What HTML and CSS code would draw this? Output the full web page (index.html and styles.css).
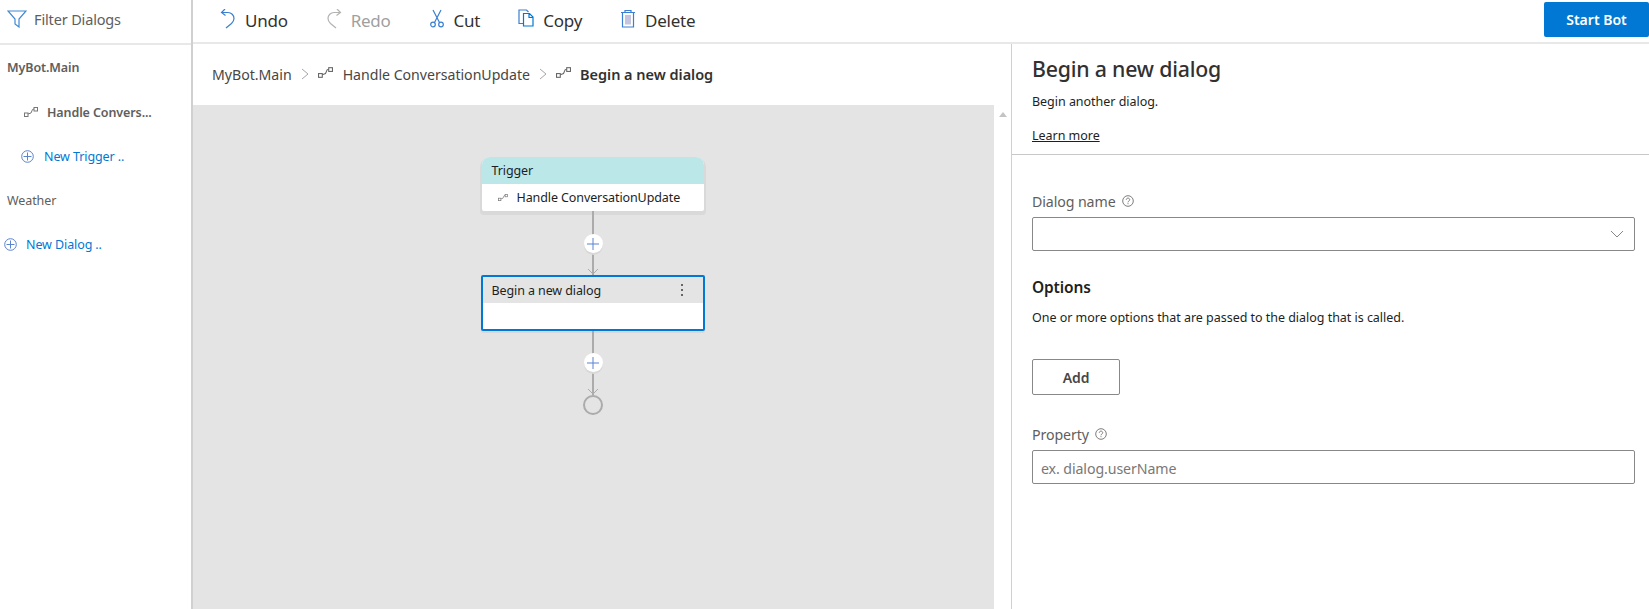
FILE: index.html
```html
<!DOCTYPE html>
<html lang="en">
<head>
<meta charset="utf-8">
<title>Begin a new dialog</title>
<link rel="stylesheet" href="styles.css">
</head>
<body>
<div class="app">
  <aside class="sidebar">
    <div class="filter">
      <svg class="filter-icon" viewBox="0 0 20 18"><path d="M1 1h18l-7 8v8l-4-3V9z"/></svg>
      <span>Filter Dialogs</span>
    </div>
    <div class="tree">
      <div class="tree-row tree-root tree-first strong">MyBot.Main</div>
      <div class="tree-row tree-trigger strong">
        <svg class="node-icon" viewBox="0 0 14 10"><use href="#trigger"/></svg>
        <span>Handle Convers...</span>
      </div>
      <div class="tree-row tree-new-trigger link">
        <svg class="plus-icon" viewBox="0 0 13 13"><use href="#circle-plus"/></svg>
        <span>New Trigger ..</span>
      </div>
      <div class="tree-row tree-root">Weather</div>
      <div class="tree-row tree-new-dialog link">
        <svg class="plus-icon" viewBox="0 0 13 13"><use href="#circle-plus"/></svg>
        <span>New Dialog ..</span>
      </div>
    </div>
  </aside>

  <div class="main">
    <header class="toolbar">
      <div class="action">
        <svg class="tool-icon" viewBox="0 0 16 20"><path d="M5 1L1.500 4.500 5.500 7.500M1.500 4.500h6.500a6 6 0 0 1 6 6c0 2-1 3.500-2.500 5L6 20" transform="translate(0 -1)"/></svg>
        <span>Undo</span>
      </div>
      <div class="action disabled">
        <svg class="tool-icon" viewBox="0 0 16 20"><path d="M11 1l3.500 3.500L10.500 7.500M14.500 4.500H8a6 6 0 0 0-6 6c0 2 1 3.500 2.500 5L10 20" transform="translate(0 -1)"/></svg>
        <span>Redo</span>
      </div>
      <div class="action">
        <svg class="tool-icon" viewBox="0 0 16 20"><path d="M4 1l6.500 12.500M12 1L5.500 13.500"/><circle cx="4" cy="15.500" r="2.300"/><circle cx="12" cy="15.500" r="2.300"/></svg>
        <span>Cut</span>
      </div>
      <div class="action">
        <svg class="tool-icon" viewBox="0 0 16 20"><path d="M5.500 14.500H1V1h7.500l2 2"/><path class="strong-stroke" d="M5.500 4.500h6l3.500 3.500v9H5.500zM11 4.500V8.500h4"/></svg>
        <span>Copy</span>
      </div>
      <div class="action">
        <svg class="tool-icon" viewBox="0 0 16 20"><path d="M1 3.500h14M5 3.500V1.500h6v2M2.500 3.500v14.500h11V3.500"/><path class="bars" d="M6 6v9.500M8 6v9.500M10 6v9.500"/></svg>
        <span>Delete</span>
      </div>
      <button class="start-bot">Start Bot</button>
    </header>

    <div class="workspace">
      <section class="design">
        <nav class="crumbs">
          <span>MyBot.Main</span>
          <svg class="chevron" viewBox="0 0 8 12"><path d="M1 1l6 5-6 5"/></svg>
          <svg class="crumb-icon" viewBox="0 0 14 10"><use href="#trigger"/></svg>
          <span>Handle ConversationUpdate</span>
          <svg class="chevron" viewBox="0 0 8 12"><path d="M1 1l6 5-6 5"/></svg>
          <svg class="crumb-icon" viewBox="0 0 14 10"><use href="#trigger"/></svg>
          <span class="crumb-current">Begin a new dialog</span>
        </nav>
        <div class="canvas-wrap">
          <div class="canvas">
            <div class="card trigger-card">
              <div class="card-head trigger-head">Trigger</div>
              <div class="card-body">
                <svg class="card-icon" viewBox="0 0 14 10"><use href="#trigger"/></svg>
                <span>Handle ConversationUpdate</span>
              </div>
            </div>
            <div class="edge edge-first">
              <span class="add"><svg viewBox="0 0 12 12"><path d="M6 0v12M0 6h12"/></svg></span>
              <svg class="arrow" viewBox="0 0 12 7"><path d="M1 1l5 5 5-5"/></svg>
            </div>
            <div class="card dialog-card">
              <div class="card-head dialog-head">
                <span>Begin a new dialog</span>
                <span class="dots"><i></i><i></i><i></i></span>
              </div>
              <div class="dialog-body"></div>
            </div>
            <div class="edge edge-second">
              <span class="add"><svg viewBox="0 0 12 12"><path d="M6 0v12M0 6h12"/></svg></span>
              <svg class="arrow" viewBox="0 0 12 7"><path d="M1 1l5 5 5-5"/></svg>
            </div>
            <div class="end"></div>
          </div>
          <div class="scrollbar"><span class="scroll-up"></span></div>
        </div>
      </section>

      <aside class="panel">
        <div class="panel-head">
          <h1>Begin a new dialog</h1>
          <p class="small">Begin another dialog.</p>
          <a class="small learn" href="#">Learn more</a>
        </div>
        <div class="panel-form">
          <label class="field-label">Dialog name
            <svg class="help" viewBox="0 0 12 12"><use href="#help"/></svg>
          </label>
          <div class="select">
            <svg class="select-chevron" viewBox="0 0 14 8"><path d="M1 1l6 6 6-6"/></svg>
          </div>
          <h2>Options</h2>
          <p class="small options-desc">One or more options that are passed to the dialog that is called.</p>
          <button class="add-btn">Add</button>
          <label class="field-label property-label">Property
            <svg class="help" viewBox="0 0 12 12"><use href="#help"/></svg>
          </label>
          <div class="text-input">ex. dialog.userName</div>
        </div>
      </aside>
    </div>
  </div>
</div>

<svg class="defs" width="0" height="0">
  <defs>
    <g id="trigger" fill="none" stroke="currentColor" stroke-width="1">
      <rect x="0.500" y="6" width="3.500" height="3.500"/>
      <rect x="10" y="0.500" width="3.500" height="3.500"/>
      <path d="M4 7l3-1 1.500-3.500L10 2"/>
    </g>
    <g id="circle-plus" fill="none" stroke="currentColor" stroke-width="1">
      <circle cx="6.500" cy="6.500" r="5.800"/>
      <path d="M6.500 2.500v8M2.500 6.500h8"/>
    </g>
    <g id="help" fill="none" stroke="currentColor" stroke-width="0.900">
      <circle cx="6" cy="6" r="5.300"/>
      <path d="M4.300 4.800c0-1 .8-1.700 1.700-1.700s1.700 .7 1.700 1.600c0 1.300-1.700 1.300-1.700 2.600M6 8.200v1"/>
    </g>
  </defs>
</svg>
</body>
</html>
```

FILE: styles.css
```css
* { box-sizing: border-box; }
html, body { margin: 0; padding: 0; height: 100%; overflow: hidden; background: #fff; }
body { font-family: "Noto Sans", "Open Sans", sans-serif; color: #323130; }
.defs { position: absolute; }
svg { display: block; flex: none; }

.app { display: flex; width: 1649px; height: 609px; }

/* sidebar */
.sidebar { width: 193px; flex: none; border-right: 2px solid #d0d0d0; }
.filter { height: 45px; border-bottom: 2px solid #e8e8e8; display: flex; align-items: center; gap: 7px; padding: 0 0 5px 7px; font-size: 14.500px; letter-spacing: -0.15px; color: #605e5c; }
.filter-icon { width: 20px; height: 18px; fill: none; stroke: #3f8ad2; stroke-width: 1.200; }
.tree { padding-top: 1px; }
.tree-row { height: 44px; display: flex; align-items: center; font-size: 12.500px; letter-spacing: -0.1px; color: #605e5c; }
.tree-row.strong { font-weight: 600; }
.tree-root { padding-left: 7px; }
.tree-first { padding-bottom: 2px; }
.tree-trigger { padding-left: 24px; gap: 9px; }
.tree-new-trigger { padding-left: 21px; gap: 10px; }
.tree-new-dialog { padding-left: 4px; gap: 9px; }
.link { color: #0078d4; }
.node-icon { width: 14px; height: 10px; color: #777; }
.plus-icon { width: 13px; height: 13px; color: #5a83d0; }

/* main */
.main { flex: 1; min-width: 0; display: flex; flex-direction: column; }
.toolbar { height: 44px; flex: none; border-bottom: 2px solid #e8e8e8; display: flex; align-items: flex-start; padding-left: 27px; gap: 38px; }
.action { height: 41px; display: flex; align-items: center; gap: 9px; font-size: 17px; letter-spacing: -0.25px; color: #323130; }
.action.disabled { color: #a19f9d; }
.tool-icon { width: 16px; height: 20px; margin-top: -4px; fill: none; stroke: #3a7fd0; stroke-width: 1.200; }
.disabled .tool-icon { stroke: #b5b3b1; }
.strong-stroke { stroke: #0078d4; }
.bars { stroke: #8a8ac0; stroke-width: 1; }
.start-bot { margin-left: auto; width: 105px; height: 35px; margin-top: 2px; border: 0; border-radius: 2px; background: #0078d4; color: #fff; font: 600 14px "Noto Sans", sans-serif; }

.workspace { flex: 1; display: flex; min-height: 0; }
.design { width: 819px; flex: none; display: flex; flex-direction: column; border-right: 1px solid #d0d0d0; }
.crumbs { height: 61px; flex: none; display: flex; align-items: center; padding: 0 0 1px 19px; font-size: 14.150px; letter-spacing: -0.02px; color: #484644; }
.crumb-current { font-weight: 600; color: #323130; margin-left: 9px; font-size: 14.500px; }
.crumbs > span:nth-of-type(2) { margin-left: 10px; }
.chevron { width: 8px; height: 12px; margin: 0 9px 0 9px; fill: none; stroke: #a8a6a4; stroke-width: 1; }
.crumb-icon { width: 15px; height: 11px; color: #666; margin-top: -3px; }

.canvas-wrap { flex: 1; display: flex; min-height: 0; }
.canvas { flex: 1; background: #e4e4e4; display: flex; flex-direction: column; align-items: center; padding: 52px 2px 0 0; }
.scrollbar { width: 17px; flex: none; background: #fff; display: flex; justify-content: center; padding-top: 7px; }
.scroll-up { width: 0; height: 0; border-left: 4px solid transparent; border-right: 4px solid transparent; border-bottom: 5px solid #c4c4c4; }

.card { width: 222px; background: #fff; }
.trigger-card { height: 54px; border-radius: 8px 8px 2px 2px; box-shadow: 0 2px 0 2px #d9d9d9; overflow: hidden; }
.card-head { height: 27px; display: flex; align-items: center; font-size: 12.500px; letter-spacing: -0.1px; color: #201f1e; padding-left: 10px; }
.trigger-head { background: #bce7e9; }
.card-body { height: 27px; display: flex; align-items: center; gap: 9px; padding-left: 16px; font-size: 12.500px; letter-spacing: -0.1px; color: #201f1e; }
.card-icon { width: 10px; height: 7px; color: #777; }

.dialog-card { width: 224px; height: 56px; border: 2px solid #0078d4; border-radius: 2px; box-shadow: 0 2px 0 #d8d8d8; }
.dialog-head { background: #e4e4e4; justify-content: space-between; padding-right: 20px; height: 26px; padding-left: 9px; }
.dots { display: flex; flex-direction: column; gap: 3px; }
.dots i { display: block; width: 2px; height: 2px; background: #666; }

.edge { position: relative; width: 2px; background: #ababab; }
.edge-first { height: 64px; }
.edge-second { height: 64px; }
.add { position: absolute; left: -8px; top: 23px; width: 19px; height: 19px; border-radius: 50%; background: #fff; box-shadow: 0 2px 0 #d8d8d8; display: flex; align-items: center; justify-content: center; }
.edge-second .add { top: 22px; }
.add svg { width: 12px; height: 12px; fill: none; stroke: #5a83d0; stroke-width: 1; }
.arrow { position: absolute; left: -5px; bottom: 0; width: 12px; height: 7px; fill: none; stroke: #ababab; stroke-width: 1; }
.end { width: 20px; height: 20px; border: 2px solid #ababab; border-radius: 50%; margin-left: 1px; }

/* panel */
.panel { flex: 1; min-width: 0; }
.panel-head { height: 111px; border-bottom: 1px solid #c8c8c8; padding: 8px 14px 0 20px; }
h1 { margin: 0; height: 34px; font-size: 21.300px; font-weight: 500; letter-spacing: -0.2px; line-height: 34px; color: #323130; }
.small { font-size: 12.500px; letter-spacing: -0.03px; color: #201f1e; margin: 0; }
.panel-head .small { display: block; line-height: 16px; }
.panel-head p { margin-top: 8px; }
.learn { margin-top: 18px; text-decoration: underline; color: #201f1e; }
.panel-form { padding: 34px 14px 0 20px; }
.field-label { height: 24px; display: flex; align-items: center; gap: 6px; font-size: 14.200px; letter-spacing: -0.1px; color: #605e5c; }
.help { width: 12px; height: 12px; color: #706e6c; margin-top: -1px; }
.select { height: 34px; margin-top: 4px; border: 1px solid #8a8886; border-radius: 2px; position: relative; display: flex; align-items: center; justify-content: flex-end; padding-right: 10px; }
.select-chevron { width: 14px; height: 8px; fill: none; stroke: #8a8886; stroke-width: 1; }
h2 { margin: 0; height: 24px; margin-top: 24px; font-size: 15.500px; font-weight: 600; letter-spacing: -0.15px; line-height: 24px; color: #201f1e; }
.options-desc { margin-top: 11px; line-height: 16px; }
.add-btn { display: block; width: 88px; height: 36px; margin-top: 33px; background: #fff; border: 1px solid #8a8886; border-radius: 2px; font: 600 14px "Noto Sans", sans-serif; letter-spacing: -0.1px; color: #484644; }
.property-label { margin-top: 27px; }
.text-input { height: 34px; margin-top: 4px; border: 1px solid #8a8886; border-radius: 2px; display: flex; align-items: center; padding: 3px 0 0 8px; font-size: 14.200px; letter-spacing: -0.1px; color: #7a7876; }
```
